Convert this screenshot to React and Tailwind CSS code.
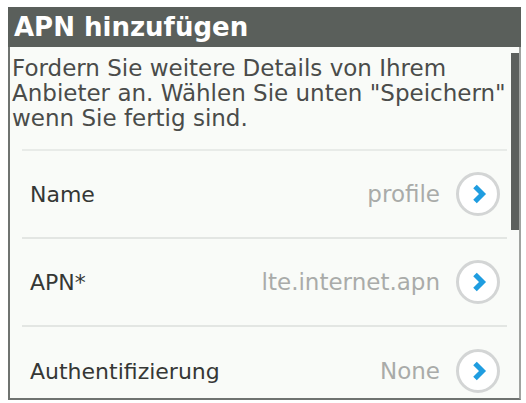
import React from "react";

const font = { fontFamily: '"DejaVu Sans", Verdana, sans-serif' };

function Chevron() {
  return (
    <div className="w-[44px] h-[44px] rounded-full border-[3px] border-[#d3d5d5] bg-white flex items-center justify-center shrink-0">
      <svg width="16" height="20" viewBox="0 0 16 20" className="ml-[2px]">
        <path d="M4 2.5 L11.5 10 L4 17.5" fill="none" stroke="#1f9de0" strokeWidth="5" strokeLinejoin="miter" strokeLinecap="butt" />
      </svg>
    </div>
  );
}

function Row({ label, value, last }) {
  return (
    <div className={"mx-[12px] h-[88px] flex items-center pl-[8px] pr-[7px] shrink-0 " + (last ? "" : "border-b-2 border-[#e3e6e3]")}>
      <span className="text-[22px] text-[#353735] flex-1">{label}</span>
      <span className="text-[23px] text-[#a9aba9] mr-[16px]">{value}</span>
      <Chevron />
    </div>
  );
}

export default function App() {
  return (
    <div className="w-[526px] h-[403px] bg-white pt-[7px] pl-[8px] pr-[5px]" style={font}>
      <div className="h-[393px] flex flex-col border-l-2 border-b-2 border-r-2 border-[#6f7370] border-r-[#a0a3a0]">
        <div className="h-[40px] bg-[#5a5f5b] flex items-center pl-[6px] -ml-[2px] -mr-[2px] shrink-0">
          <span className="text-white font-bold text-[26px] leading-none">APN hinzufügen</span>
        </div>
        <div className="relative flex-1 bg-[#f9fbf8] overflow-hidden flex flex-col">
          <div className="absolute right-0 top-[6px] w-[8px] h-[177px] bg-[#5c605d]" />
          <p className="pt-[9px] pl-[2px] pr-[12px] pb-[18px] text-[23px] leading-[25px] text-[#4a4c4a]">
            Fordern Sie weitere Details von Ihrem Anbieter an. Wählen Sie unten "Speichern" wenn Sie fertig sind.
          </p>
          <div className="mx-[12px] border-t-2 border-[#e8ebe8]" />
          <Row label="Name" value="profile" />
          <Row label="APN*" value="lte.internet.apn" />
          <Row label="Authentifizierung" value="None" last />
        </div>
      </div>
    </div>
  );
}
